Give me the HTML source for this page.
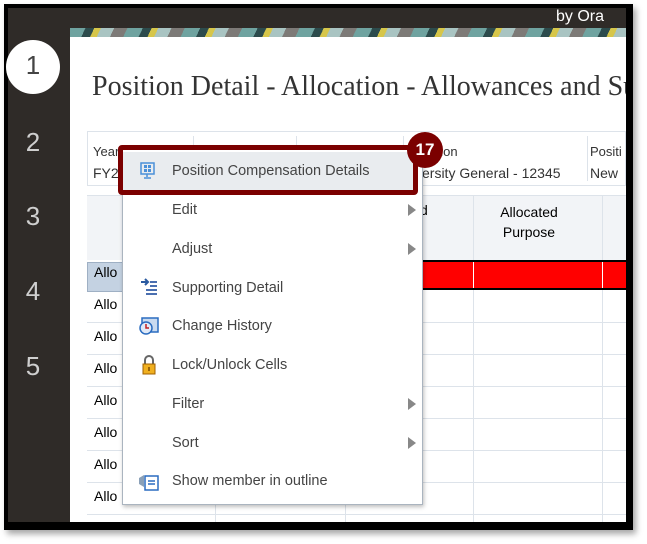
<!DOCTYPE html>
<html><head><style>
body{margin:0;width:647px;height:544px;background:#fff;position:relative;overflow:hidden;font-family:"Liberation Sans",sans-serif}
.a{position:absolute}
.frame{left:4px;top:4px;width:629px;height:526px;background:#000;box-shadow:3px 4px 6px rgba(0,0,0,.35)}
.side{left:8px;top:8px;width:62px;height:514px;background:#2f2b28}
.num{color:#cfcfcf;font-size:26px;width:50px;text-align:center;left:8px}
.mi{position:absolute;left:172px;font-size:14.5px;color:#444}
.arr{position:absolute;left:408px;width:0;height:0;border-left:8px solid #888;border-top:6px solid transparent;border-bottom:6px solid transparent}
.allo{position:absolute;left:94px;font-size:14px;color:#000}
</style></head><body>
<div class="a frame"></div>
<div class="a side"></div>
<div class="a" style="left:70px;top:8px;width:556px;height:20px;background:#2f2b28"></div>
<div class="a" style="left:556px;top:8px;color:#fff;font-size:16px">by Ora</div>
<div class="a" style="left:70px;top:28px;width:556px;height:9px;background:repeating-linear-gradient(115deg,#6fa3a0 0 14px,#2c4b4c 14px 22px,#d6c64a 22px 28px,#a9c4c2 28px 40px,#7d7a77 40px 52px)"></div>
<div class="a" style="left:70px;top:37px;width:556px;height:485px;background:#fff"></div>
<div class="a" style="left:6px;top:40px;width:54px;height:54px;border-radius:50%;background:#fff"></div>
<div class="a num" style="top:50px;color:#444">1</div>
<div class="a num" style="top:127px">2</div>
<div class="a num" style="top:201px">3</div>
<div class="a num" style="top:276px">4</div>
<div class="a num" style="top:351px">5</div>
<div class="a" style="left:92px;top:71px;font-family:'Liberation Serif',serif;font-size:28px;color:#333;white-space:nowrap;width:534px;overflow:hidden">Position Detail - Allocation - Allowances and Su</div>
<div class="a" style="left:87px;top:131px;width:539px;height:55px;border:1px solid #dde3ea;box-sizing:border-box"></div>
<div class="a" style="left:193px;top:136px;width:1px;height:45px;background:#dde3ea"></div>
<div class="a" style="left:296px;top:136px;width:1px;height:45px;background:#dde3ea"></div>
<div class="a" style="left:403px;top:136px;width:1px;height:45px;background:#dde3ea"></div>
<div class="a" style="left:587px;top:136px;width:1px;height:45px;background:#dde3ea"></div>
<div class="a" style="left:93px;top:144px;font-size:13px;color:#333">Year</div>
<div class="a" style="left:93px;top:165px;font-size:14px;color:#333">FY2</div>
<div class="a" style="left:420px;top:144px;font-size:13px;color:#333">ization</div>
<div class="a" style="left:415px;top:165px;font-size:14px;color:#333;white-space:nowrap">versity General - 12345</div>
<div class="a" style="left:590px;top:144px;font-size:13px;color:#333">Positi</div>
<div class="a" style="left:590px;top:165px;font-size:14px;color:#333">New</div>
<div class="a" style="left:87px;top:195px;width:539px;height:64px;background:#f2f4f7;border-top:1px solid #dde3ea"></div>
<div class="a" style="left:215px;top:195px;width:1px;height:327px;background:#dde3ea"></div>
<div class="a" style="left:345px;top:195px;width:1px;height:327px;background:#dde3ea"></div>
<div class="a" style="left:473px;top:195px;width:1px;height:327px;background:#dde3ea"></div>
<div class="a" style="left:602px;top:195px;width:1px;height:327px;background:#dde3ea"></div>
<div class="a" style="left:474px;top:202px;width:110px;text-align:center;font-size:14px;color:#000;line-height:20px">Allocated<br>Purpose</div>
<div class="a" style="left:420px;top:202px;font-size:14px">d</div>
<div class="a" style="left:215px;top:260px;width:411px;height:30px;background:#f00;border-top:2px solid #000;border-bottom:2px solid #000;box-sizing:border-box"></div>
<div class="a" style="left:473px;top:262px;width:1px;height:26px;background:#fff"></div>
<div class="a" style="left:602px;top:262px;width:1px;height:26px;background:#fff"></div>
<div class="a" style="left:87px;top:262px;width:128px;height:30px;background:#c4d2e2;border:1px solid #9fb0c4;box-sizing:border-box"></div>
<div class="a" style="left:87px;top:322px;width:539px;height:1px;background:#dde3ea"></div>
<div class="a" style="left:87px;top:354px;width:539px;height:1px;background:#dde3ea"></div>
<div class="a" style="left:87px;top:386px;width:539px;height:1px;background:#dde3ea"></div>
<div class="a" style="left:87px;top:418px;width:539px;height:1px;background:#dde3ea"></div>
<div class="a" style="left:87px;top:450px;width:539px;height:1px;background:#dde3ea"></div>
<div class="a" style="left:87px;top:482px;width:539px;height:1px;background:#dde3ea"></div>
<div class="a" style="left:87px;top:514px;width:539px;height:1px;background:#dde3ea"></div>
<div class="allo" style="top:264px">Allo</div>
<div class="allo" style="top:296px">Allo</div>
<div class="allo" style="top:328px">Allo</div>
<div class="allo" style="top:360px">Allo</div>
<div class="allo" style="top:392px">Allo</div>
<div class="allo" style="top:424px">Allo</div>
<div class="allo" style="top:456px">Allo</div>
<div class="allo" style="top:488px">Allo</div>
<div class="a" style="left:122px;top:147px;width:301px;height:358px;background:#fff;border:1px solid #aab4bf;box-sizing:border-box;box-shadow:1px 2px 4px rgba(0,0,0,.25)"></div>
<div class="a" style="left:123px;top:152px;width:294px;height:38px;background:#e9ecef"></div>
<div class="a" style="left:118px;top:145px;width:300px;height:50px;border:5px solid #7b0000;border-radius:4px;box-sizing:border-box"></div>
<div class="a" style="left:407px;top:132px;width:36px;height:36px;border-radius:50%;background:#7b0000;color:#fff;font-weight:bold;font-size:17px;text-align:center;line-height:36px">17</div>
<svg class="a" style="left:139px;top:162px" width="18" height="18"><rect x="2" y="1" width="13" height="11" fill="none" stroke="#4a90d9" stroke-width="1.5"/><rect x="5" y="3" width="3" height="3" fill="#4a90d9"/><rect x="9" y="3" width="3" height="3" fill="#4a90d9"/><rect x="5" y="7" width="3" height="3" fill="#4a90d9"/><rect x="9" y="7" width="3" height="3" fill="#4a90d9"/><path d="M8 12v3M5 16h7" stroke="#4a90d9" stroke-width="1.5"/></svg>
<div class="mi" style="top:163px">Position Compensation Details</div>
<div class="mi" style="top:202px">Edit</div><div class="arr" style="top:204px"></div>
<div class="mi" style="top:241px">Adjust</div><div class="arr" style="top:243px"></div>
<svg class="a" style="left:140px;top:278px" width="20" height="20"><path d="M1 4h6M5 1l3 3-3 3" stroke="#2a5aa0" stroke-width="2" fill="none"/><path d="M10 4h7M10 8h7M6 12h11M6 16h11" stroke="#4a6fb0" stroke-width="2"/></svg>
<div class="mi" style="top:280px">Supporting Detail</div>
<svg class="a" style="left:138px;top:316px" width="22" height="20"><rect x="4" y="2" width="16" height="14" fill="#c9daf0" stroke="#2a6cc0" stroke-width="1.5"/><circle cx="8" cy="12" r="6" fill="#dfe9f7" stroke="#2a6cc0" stroke-width="1.5"/><path d="M8 8v4h3" stroke="#c02020" stroke-width="1.5" fill="none"/></svg>
<div class="mi" style="top:318px">Change History</div>
<svg class="a" style="left:140px;top:355px" width="18" height="20"><path d="M5 9V5a4 4 0 0 1 8 0v4" stroke="#666" stroke-width="2" fill="none"/><rect x="3" y="9" width="12" height="10" fill="#f0b020" stroke="#a06000"/><path d="M9 12v4" stroke="#7a4a00" stroke-width="1.5"/></svg>
<div class="mi" style="top:357px">Lock/Unlock Cells</div>
<div class="mi" style="top:396px">Filter</div><div class="arr" style="top:398px"></div>
<div class="mi" style="top:435px">Sort</div><div class="arr" style="top:437px"></div>
<svg class="a" style="left:138px;top:472px" width="22" height="20"><path d="M1 6l5-3v12l-5-3z" fill="#8aa0b8"/><rect x="7" y="4" width="13" height="14" fill="#fff" stroke="#2a6cc0" stroke-width="1.5"/><path d="M10 9h7M10 12h7" stroke="#2a6cc0" stroke-width="1.5"/></svg>
<div class="mi" style="top:473px">Show member in outline</div>
</body></html>
